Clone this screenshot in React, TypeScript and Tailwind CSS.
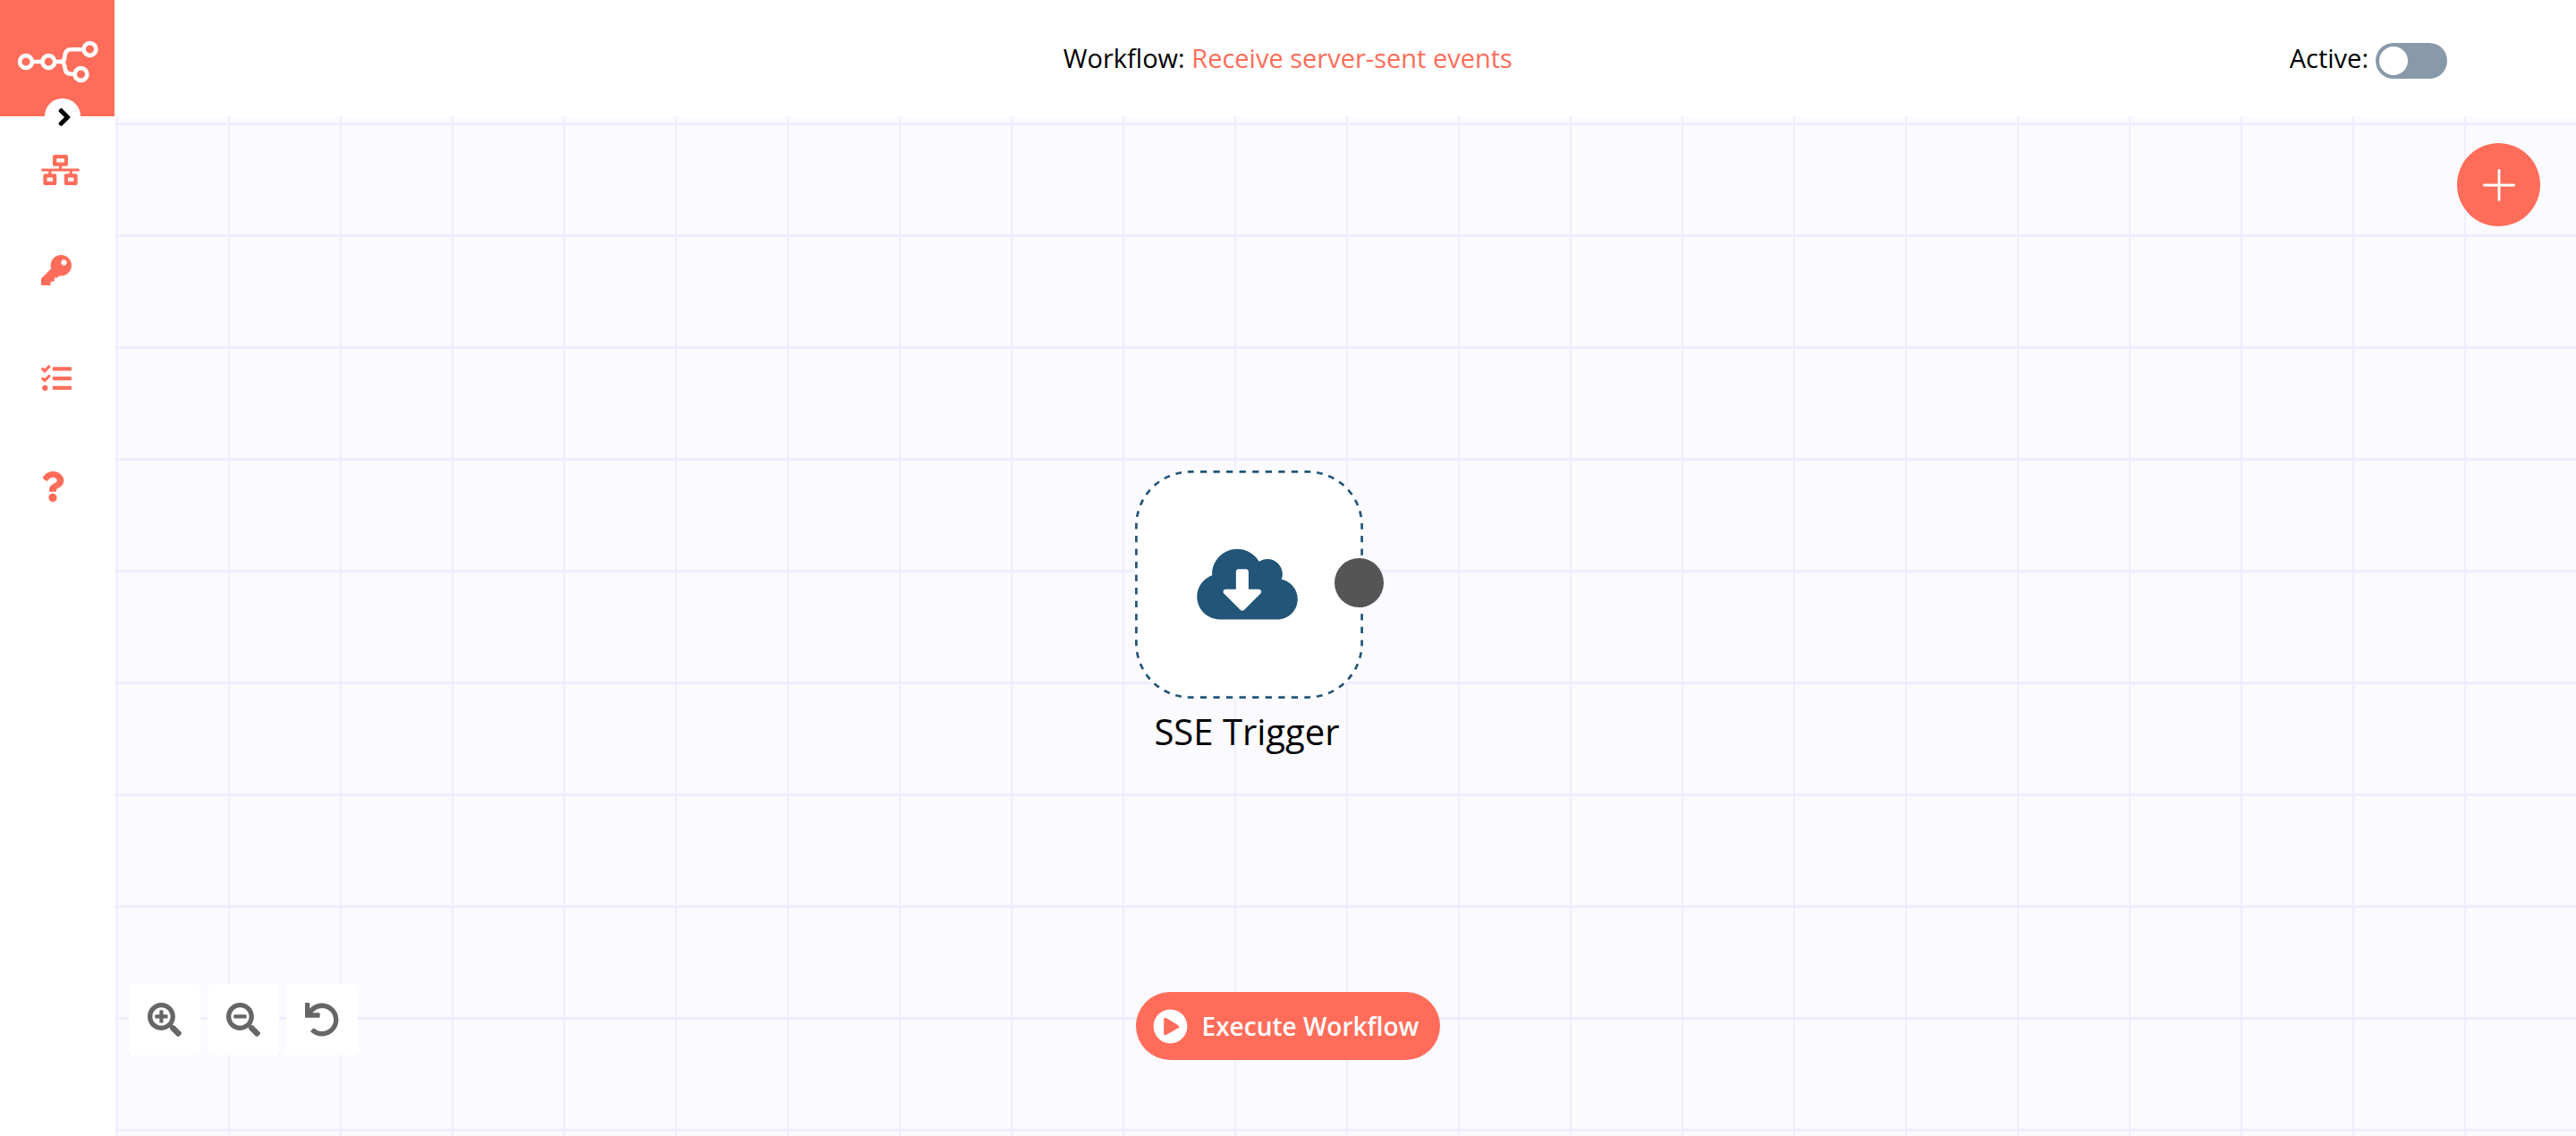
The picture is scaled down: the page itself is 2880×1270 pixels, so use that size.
import React, { useState } from 'react';
import {
  FaAngleRight,
  FaCloudDownloadAlt,
  FaKey,
  FaNetworkWired,
  FaPlayCircle,
  FaQuestion,
  FaSearchMinus,
  FaSearchPlus,
  FaTasks,
  FaUndo,
} from 'react-icons/fa';

function Logo() {
  return (
    <svg viewBox="0 0 92 48" className="h-12 w-[92px]" fill="none" stroke="#fff" strokeWidth="4.6" aria-hidden="true">
      <circle cx="11" cy="24" r="6.9" />
      <circle cx="36.300" cy="24" r="6.9" />
      <circle cx="82.500" cy="10" r="6.9" />
      <circle cx="72.500" cy="38" r="6.9" />
      <path d="M17.700 24h12M43.200 24H49.700C52.700 24 54.200 21.500 54.400 18C54.700 12.500 57.700 10.200 61.700 10.200H75.700M49.700 24C52.700 24 54.200 26.500 54.400 30C54.700 35.500 57.700 37.800 61.700 37.800H65.700" />
    </svg>
  );
}

function NavItem({ label, icon, first }: { label: string; icon: React.ReactNode; first?: boolean }) {
  return (
    <li className={first ? '' : 'mb-[9px]'}>
      <a href="#" aria-label={label} className="flex h-28 items-center pl-[46px] text-[#ff6d5a]">
        {icon}
      </a>
    </li>
  );
}

function Sidebar() {
  return (
    <aside className="flex w-32 shrink-0 flex-col bg-white">
      <div className="relative h-[130px] bg-[#ff6d5a]">
        <a href="#" aria-label="Home" className="flex h-full items-center justify-center pt-2">
          <Logo />
        </a>
        <button
          type="button"
          aria-label="Expand sidebar"
          className="absolute -bottom-5 left-[50px] flex size-10 items-center justify-center rounded-full bg-white pt-0.5 pl-1 text-[32px] text-black"
        >
          <FaAngleRight />
        </button>
      </div>
      <nav className="pt-1">
        <ul>
          <NavItem label="Workflows" icon={<FaNetworkWired className="h-[34px] w-[43px]" />} first />
          <NavItem label="Credentials" icon={<FaKey className="size-[34px]" />} />
          <NavItem label="Executions" icon={<FaTasks className="size-[34px]" />} />
          <NavItem label="Help" icon={<FaQuestion className="h-[34px] w-[26px]" />} />
        </ul>
      </nav>
    </aside>
  );
}

function Header() {
  const [active, setActive] = useState(false);
  return (
    <header className="flex h-[130px] items-center bg-white pr-36 pl-48 text-[29px] leading-10 text-black">
      <h1 className="flex-1 text-center">
        Workflow:{' '}
        <a href="#" className="text-[#ff6d5a]">
          Receive server-sent events
        </a>
      </h1>
      <label className="flex items-center gap-2">
        Active:
        <span className="relative mt-1.5 block h-10 w-20">
          <input
            type="checkbox"
            role="switch"
            checked={active}
            onChange={(e) => setActive(e.target.checked)}
            className="peer block h-10 w-20 cursor-pointer appearance-none rounded-full bg-[#8899aa] checked:bg-[#13ce66]"
          />
          <span className="pointer-events-none absolute top-1 left-1 size-8 rounded-full bg-white peer-checked:left-11" />
        </span>
      </label>
    </header>
  );
}

function TriggerNode() {
  return (
    <div className="absolute top-[396px] left-[1141px] w-[255px]">
      <div className="relative flex size-[255px] items-center justify-center rounded-[62px] bg-white pr-[5px] pb-0.5 text-[#225577]">
        <svg
          viewBox="0 0 255 255"
          className="absolute inset-0 size-full"
          fill="none"
          stroke="#225577"
          strokeWidth="2.7"
          aria-hidden="true"
        >
          <path
            strokeDasharray="7.28"
            strokeDashoffset="3.64"
            d="M62 1.400H193M253.600 62V193M193 253.600H62M1.400 193V62"
          />
          <path
            strokeDasharray="6.8"
            strokeDashoffset="3.4"
            d="M193 1.400A60.600 60.600 0 0 1 253.600 62M253.600 193A60.600 60.600 0 0 1 193 253.600M62 253.600A60.600 60.600 0 0 1 1.400 193M1.400 62A60.600 60.600 0 0 1 62 1.400"
          />
        </svg>
        <FaCloudDownloadAlt className="h-[90px] w-[113px]" />
        <span className="absolute top-[98px] -right-[23px] size-[55px] rounded-full bg-[#555555]" />
      </div>
      <p className="mt-[11px] pr-[5px] text-center text-[40px] leading-[52px] text-black">SSE Trigger</p>
    </div>
  );
}

function ZoomButton({ label, children }: { label: string; children: React.ReactNode }) {
  return (
    <button
      type="button"
      aria-label={label}
      className="flex size-20 items-center justify-center rounded-md bg-white text-[38px] text-[#666666]"
    >
      {children}
    </button>
  );
}

function Canvas() {
  return (
    <main className="relative flex-1 overflow-hidden bg-[#fafaff] bg-[linear-gradient(to_right,#eeeeff_2px,transparent_2px),linear-gradient(to_bottom,#eeeeff_3px,transparent_3px)] bg-[size:125px_125px] bg-[position:2px_0,0_7px]">
      <TriggerNode />

      <button
        type="button"
        aria-label="Add node"
        className="absolute top-[30px] right-10 flex size-[93px] items-center justify-center rounded-full bg-[#ff6d5a]"
      >
        <svg viewBox="0 0 36 36" className="size-9" stroke="#fff" strokeWidth="2.8" strokeLinecap="round" aria-hidden="true">
          <path d="M18 1.400V34.600M1.400 18H34.600" />
        </svg>
      </button>

      <div className="absolute bottom-[90px] left-4 flex gap-2">
        <ZoomButton label="Zoom in">
          <FaSearchPlus />
        </ZoomButton>
        <ZoomButton label="Zoom out">
          <FaSearchMinus />
        </ZoomButton>
        <ZoomButton label="Reset zoom">
          <FaUndo />
        </ZoomButton>
      </div>

      <div className="pointer-events-none absolute inset-x-0 bottom-[85px] flex justify-center pr-32">
        <button
          type="button"
          className="pointer-events-auto flex h-[76px] items-center gap-4 rounded-full bg-[#ff6d5a] pr-6 pl-[19px] text-[28px] font-semibold text-white"
        >
          <FaPlayCircle className="text-[39px]" />
          Execute Workflow
        </button>
      </div>
    </main>
  );
}

export default function App() {
  return (
    <div className="flex min-h-screen bg-white font-['Open_Sans',sans-serif]">
      <Sidebar />
      <div className="flex min-w-0 flex-1 flex-col">
        <Header />
        <Canvas />
      </div>
    </div>
  );
}
